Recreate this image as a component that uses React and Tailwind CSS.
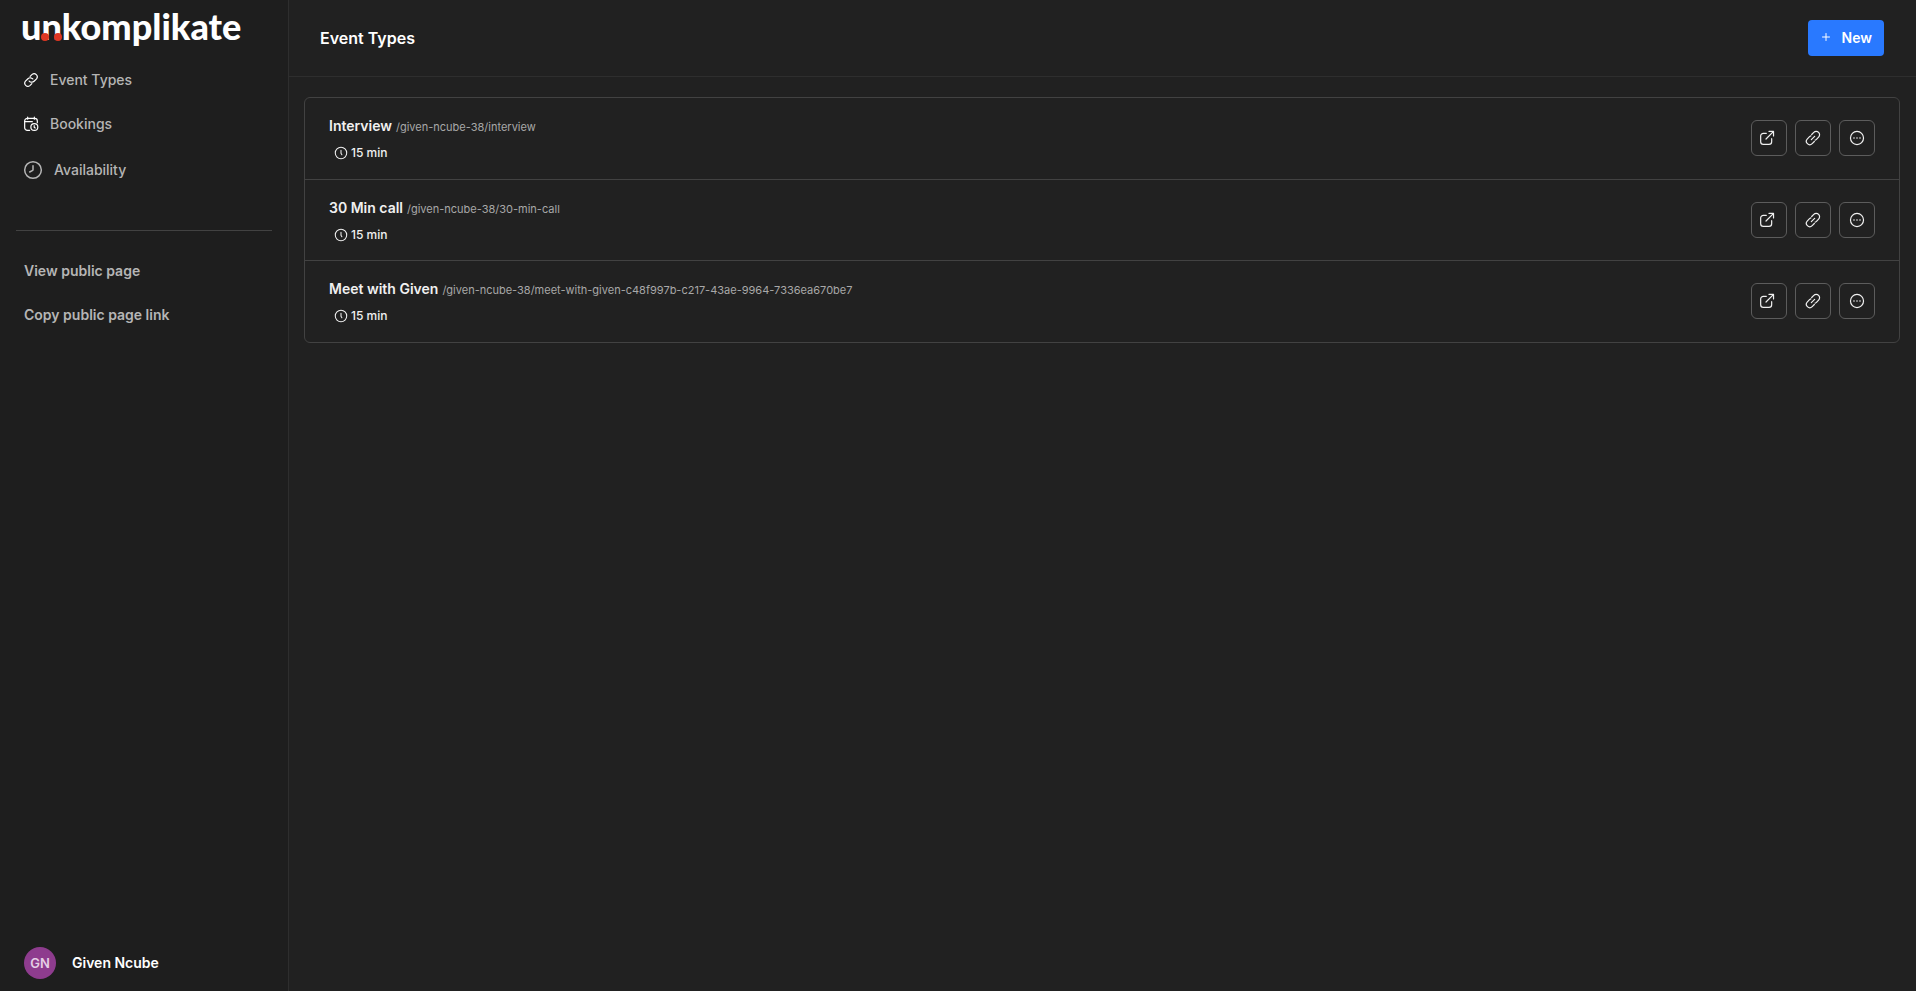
const eventTypes = [
  { id: 1, title: 'Interview', slug: '/given-ncube-38/interview', duration: 15 },
  { id: 2, title: '30 Min call', slug: '/given-ncube-38/30-min-call', duration: 15 },
  {
    id: 3,
    title: 'Meet with Given',
    slug: '/given-ncube-38/meet-with-given-c48f997b-c217-43ae-9964-7336ea670be7',
    duration: 15
  }
];

const Icon = ({ className, strokeWidth = 1.5, children }) => (
  <svg
    viewBox="0 0 24 24"
    fill="none"
    stroke="currentColor"
    strokeWidth={strokeWidth}
    strokeLinecap="round"
    strokeLinejoin="round"
    aria-hidden="true"
    className={className}
  >
    {children}
  </svg>
);

const ChainIcon = () => (
  <Icon className="size-4 -mx-px" strokeWidth={1.8}>
    <path d="M9.3 13.6a5 5 0 0 0 7.3.3l3.7-3.7a4.7 4.7 0 0 0-6.6-6.6l-3 3" />
    <path d="M14.7 10.4a5 5 0 0 0-7.3-.3l-3.7 3.7a4.7 4.7 0 0 0 6.6 6.6l3-3" />
  </Icon>
);

const CalendarClockIcon = () => (
  <Icon className="size-4 -mx-px" strokeWidth={1.8}>
    <path d="M10 21.5H6.5a4 4 0 0 1-4-4v-10a4 4 0 0 1 4-4h11a4 4 0 0 1 4 4V10" />
    <path d="M7 1.8v3M17 1.8v3M2.5 8.5H14" />
    <circle cx="17" cy="16.5" r="5.2" />
    <path d="M16.8 14.5v2.3l1.5 1.2" />
  </Icon>
);

const ClockIcon = () => (
  <Icon className="my-0.5 size-5 -mx-px" strokeWidth={1.8}>
    <circle cx="12" cy="12" r="10" />
    <path d="M12 7v4.6q0 .8-.8 1.1L8 14.4" />
  </Icon>
);

const DurationIcon = () => (
  <Icon className="size-3.5" strokeWidth={1.8}>
    <circle cx="12" cy="12" r="9.8" />
    <path d="M12 7.5v5l1.5 2.5" />
  </Icon>
);

const OpenIcon = () => (
  <Icon className="size-4 mr-1" strokeWidth={1.8}>
    <path d="M11 5H6.5a4 4 0 0 0-4 4v8.5a4 4 0 0 0 4 4H15a4 4 0 0 0 4-4V13" />
    <path d="M10.5 13.5 21.5 2.5M15 2.2h6.8V9" />
  </Icon>
);

const LinkIcon = () => (
  <Icon className="size-4" strokeWidth={1.8}>
    <path d="m9.5 14.5 5-5" />
    <path d="m10 6.8 3.2-3.2a5 5 0 0 1 7.2 7.2l-3.2 3.2a5 5 0 0 1-2 1.2" />
    <path d="m14 17.2-3.2 3.2a5 5 0 0 1-7.2-7.2l3.2-3.2a5 5 0 0 1 2-1.2" />
  </Icon>
);

const MoreIcon = () => (
  <Icon className="size-4" strokeWidth={1.8}>
    <circle cx="12" cy="12" r="9.8" />
    <path d="M7.5 12h.01M12 12h.01M16.5 12h.01" strokeWidth={2.4} />
  </Icon>
);

const navigation = [
  { label: 'Event Types', icon: <ChainIcon />, className: 'text-white' },
  { label: 'Bookings', icon: <CalendarClockIcon />, className: 'text-white' },
  { label: 'Availability', icon: <ClockIcon />, className: 'text-[#b5b5b5]' }
];

const Logo = () => (
  <a href="#" className="relative block w-fit font-['Lato',sans-serif] text-4xl leading-10 font-black text-white">
    unkomplikate
    <span className="absolute bottom-[5px] left-5 size-2 rounded-full bg-[#de3723]" />
    <span className="absolute bottom-[5px] left-[33px] size-2 rounded-full bg-[#de3723]" />
  </a>
);

const ActionButton = ({ label, children }) => (
  <button
    type="button"
    aria-label={label}
    className="flex size-9 items-center justify-center rounded-md border border-[#5c5c5c] text-[#f0f0f0] hover:bg-[#2c2c2c]"
  >
    {children}
  </button>
);

const Sidebar = () => (
  <aside className="flex w-72 shrink-0 flex-col bg-[#1e1e1e] text-sm text-[#b5b5b5]">
    <div className="pt-1.5 pl-[21px]">
      <Logo />
    </div>
    <nav className="mt-3 flex flex-col px-6 font-medium">
      {navigation.map((item) => (
        <a key={item.label} href="#" className="flex items-center gap-3 py-3 hover:text-white">
          <span className={item.className}>{item.icon}</span>
          {item.label}
        </a>
      ))}
    </nav>
    <hr className="mx-4 mt-9 border-[#424242]" />
    <div className="mt-[18px] flex flex-col px-6 font-semibold">
      <a href="#" className="py-3 hover:text-white">View public page</a>
      <button type="button" className="py-3 text-left hover:text-white">Copy public page link</button>
    </div>
    <div className="mt-auto flex items-center gap-4 px-6 pb-3 font-semibold">
      <span className="flex size-8 items-center justify-center rounded-full bg-[#8e3c8e] text-[13px] text-[#e5cfe5]">
        GN
      </span>
      <span className="text-white">Given Ncube</span>
    </div>
  </aside>
);

const EventTypeRow = ({ eventType }) => (
  <li className="flex min-h-[81px] items-start justify-between px-6 pt-[18px] first:min-h-[82px]">
    <div>
      <div className="flex items-baseline gap-1 leading-5">
        <h2 className="text-sm font-semibold text-[#f0f0f0]">{eventType.title}</h2>
        <a href="#" className="text-[11px] text-[#a8a8a8] hover:underline">{eventType.slug}</a>
      </div>
      <div className="mt-1.5 ml-[5px] flex items-center gap-[3px] text-xs leading-5 font-medium text-[#f0f0f0]">
        <DurationIcon />
        {eventType.duration} min
      </div>
    </div>
    <div className="mt-1 flex gap-2">
      <ActionButton label="Open booking page">
        <OpenIcon />
      </ActionButton>
      <ActionButton label="Copy link">
        <LinkIcon />
      </ActionButton>
      <ActionButton label="More options">
        <MoreIcon />
      </ActionButton>
    </div>
  </li>
);

export default function App() {
  return (
    <div className="flex min-h-screen bg-[#212121] font-['Inter',sans-serif]">
      <Sidebar />
      <main className="min-w-0 flex-1 border-l border-[#2e2e2e]">
        <header className="flex items-center justify-between border-b border-[#2e2e2e] py-5 pr-8 pl-[31px]">
          <h1 className="text-base font-semibold text-white">Event Types</h1>
          <button
            type="button"
            className="flex h-9 items-center gap-2.5 rounded bg-[#2979ff] px-3 text-sm font-semibold text-white hover:bg-[#1f6bea]"
          >
            <Icon className="mb-0.5 size-3" strokeWidth={2}>
              <path d="M12 5v14M5 12h14" />
            </Icon>
            New
          </button>
        </header>
        <section className="py-5 pr-4 pl-[15px]">
          <ul className="divide-y divide-[#424242] rounded-md border border-[#424242]">
            {eventTypes.map((eventType) => (
              <EventTypeRow key={eventType.id} eventType={eventType} />
            ))}
          </ul>
        </section>
      </main>
    </div>
  );
}
